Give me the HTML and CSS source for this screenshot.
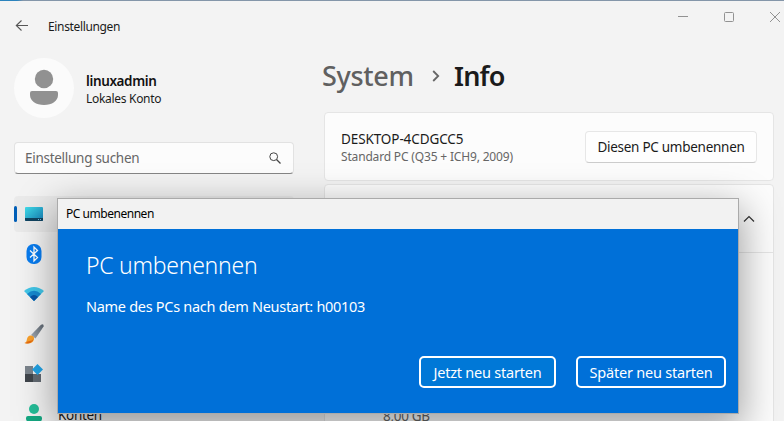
FILE: index.html
```html
<!DOCTYPE html>
<html lang="de">
<head>
<meta charset="utf-8">
<title>Einstellungen</title>
<link rel="stylesheet" href="styles.css">
</head>
<body>
<div class="window">
  <header class="titlebar">
    <svg class="back" width="14" height="12" viewBox="0 0 14 12"><path d="M13 5.500H1.500M6.500 .5L1.300 5.500l5.200 5" fill="none" stroke="#555" stroke-width="1.100"/></svg>
    <span class="app-title">Einstellungen</span>
    <div class="controls">
      <svg width="12" height="12" viewBox="0 0 12 12"><path d="M1 5.500h10" /></svg>
      <svg width="12" height="12" viewBox="0 0 12 12"><rect x="1.500" y="1.500" width="9" height="9" rx="1"/></svg>
      <svg width="12" height="12" viewBox="0 0 12 12"><path d="M1 1l10 10M11 1L1 11"/></svg>
    </div>
  </header>
  <div class="columns">
    <aside class="sidebar">
      <div class="account">
        <svg class="avatar" width="60" height="60" viewBox="0 0 60 60"><circle cx="30" cy="30" r="30" fill="#fbfbfb"/><circle cx="30" cy="21" r="9.200" fill="#919191"/><path d="M18 33h24q2 0 2 2v2c0 6-6 10-14 10s-14-4-14-10v-2q0-2 2-2z" fill="#919191"/></svg>
        <div class="account-text">
          <div class="user">linuxadmin</div>
          <div class="kind">Lokales Konto</div>
        </div>
      </div>
      <div class="search">
        <span class="placeholder">Einstellung suchen</span>
        <svg width="12" height="12" viewBox="0 0 12 12" fill="none" stroke="#444"><circle cx="4.700" cy="4.700" r="3.900"/><path d="M7.500 7.500l4 4" stroke-width="1.200"/></svg>
      </div>
      <nav class="nav">
        <div class="item selected">
          <svg width="20" height="20" viewBox="0 0 20 20"><defs><linearGradient id="scr" x2="1" y2="1"><stop stop-color="#40dbe8"/><stop offset="1" stop-color="#157fb7"/></linearGradient></defs><rect x="1" y="3" width="18" height="14" rx="1" fill="url(#scr)"/><path d="M1 14h18v2q0 1-1 1H2q-1 0-1-1z" fill="#104360"/><path d="M14 15.500h1m1 0h1" stroke="#70bcdd"/></svg>
        </div>
        <div class="item">
          <svg width="20" height="20" viewBox="0 0 20 20"><rect x="2.500" width="15" height="20" rx="7" fill="#087cf0"/><path d="M6 6.500l7.500 7L10 17V3l3.500 3.500L6 13.500" fill="none" stroke="#fff" stroke-width="1.300"/></svg>
        </div>
        <div class="item">
          <svg width="20" height="20" viewBox="0 0 20 20"><path d="M0 7Q10-1 20 7L10 17z" fill="#41c6e8"/><path d="M3 10q7-6.500 14 0l-7 7z" fill="#168ad0"/><path d="M6 13q4-4 8 0l-4 4z" fill="#0754a6"/></svg>
        </div>
        <div class="item">
          <svg width="20" height="20" viewBox="0 0 20 20"><defs><linearGradient id="handle" x1="1" x2="0" y2="1"><stop stop-color="#5e6771"/><stop offset="1" stop-color="#a5afba"/></linearGradient></defs><path d="M17 .8Q20-.8 19.600 2.500L11.500 14.500 7 11z" fill="url(#handle)"/><path d="M6.500 11.500q4 0 3.500 3.500c-1 5-6 5-9.500 4 2-.5 2-2 2.500-4q.8-3.500 3.500-3.500z" fill="#f9a02c"/><path d="M.5 19q3 1 6-.3 2.500-1 3-3.700-1.500 2-4 2t-3 1.500z" fill="#e66c12"/></svg>
        </div>
        <div class="item">
          <svg width="20" height="20" viewBox="0 0 20 20"><path d="M1 2h8v8H1z" fill="#7b848c"/><path d="M1 10h8v8H1z" fill="#3f454b"/><path d="M9 10h8v8H9z" fill="#626a72"/><path d="M13.500 0l5.500 5.500-5.500 5.500L8 5.500z" fill="#22a3e5"/></svg>
        </div>
        <div class="item">
          <svg width="20" height="20" viewBox="0 0 20 20"><circle cx="10" cy="5" r="5" fill="#25bd98"/><path d="M4 12h12q2 0 2 2v1q-1 5-8 5t-8-5v-1q0-2 2-2z" fill="#15a882"/></svg>
          <span class="nav-label">Konten</span>
        </div>
      </nav>
    </aside>
    <main class="content">
      <h1 class="crumbs"><span class="parent">System</span><svg width="8" height="12" viewBox="0 0 8 12"><path d="M1.200 1l5 5-5 5" fill="none" stroke="#666" stroke-width="1.800"/></svg><span class="current">Info</span></h1>
      <section class="card device">
        <div class="device-text">
          <div class="device-name">DESKTOP-4CDGCC5</div>
          <div class="device-model">Standard PC (Q35 + ICH9, 2009)</div>
        </div>
        <button class="rename"><span>Diesen PC umbenennen</span></button>
      </section>
      <section class="card specs">
        <div class="specs-head"><svg width="12" height="8" viewBox="0 0 12 8"><path d="M1 6.500l5-5 5 5" fill="none" stroke="#333" stroke-width="1.200"/></svg></div>
        <div class="specs-body"><span class="memory">8,00 GB</span></div>
      </section>
    </main>
  </div>
</div>
<div class="dialog">
  <div class="dialog-title"><span>PC umbenennen</span></div>
  <div class="dialog-body">
    <h2><span>PC umbenennen</span></h2>
    <p><span>Name des PCs nach dem Neustart: h00103</span></p>
    <div class="actions">
      <button class="now"><span>Jetzt neu starten</span></button>
      <button class="later"><span>Später neu starten</span></button>
    </div>
  </div>
</div>
</body>
</html>
```
FILE: styles.css
```css
* { box-sizing: border-box; }
body { margin: 0; height: 421px; overflow: hidden; background: #f3f3f3; font-family: "Noto Sans", "Open Sans", sans-serif; color: #1b1b1b; white-space: nowrap; }
svg { display: block; flex: none; }
button { font: inherit; color: inherit; padding: 0; display: flex; align-items: center; justify-content: center; white-space: nowrap; }
.window { height: 421px; overflow: hidden; border-top: 1px solid #8496a9; border-image: linear-gradient(90deg, #2b83bd 0, #2b83bd 18px, #8496a9 24px) 1; }
.titlebar { height: 49px; display: flex; align-items: center; padding-left: 15px; }
.app-title { margin-left: 19px; font-size: 12px; letter-spacing: -.35px; line-height: 18px; padding-top: 2px; }
.controls { margin: -17px 3px 0 auto; display: flex; gap: 34px; }
.controls svg { fill: none; stroke: #929292; }
.columns { display: flex; height: 371px; }
.sidebar { width: 324px; padding: 8px 30px 0 14px; }
.account { display: flex; height: 60px; gap: 12px; }
.account-text { padding-top: 14px; }
.user { font-size: 13.500px; font-weight: 600; line-height: 19px; letter-spacing: -.37px; color: #111; }
.kind { font-size: 12px; line-height: 16px; letter-spacing: -.3px; }
.search { width: 280px; height: 32px; margin-top: 24px; padding: 0 12px 0 10px; display: flex; align-items: center; justify-content: space-between; background: #fcfcfc; border: 1px solid #e2e2e2; border-bottom-color: #858585; border-radius: 4px; }
.placeholder { color: #666; font-size: 13.500px; letter-spacing: -.28px; }
.nav { margin-top: 22px; display: grid; gap: 4px; width: 280px; }
.item { height: 36px; padding-left: 10px; display: flex; align-items: center; gap: 14px; border-radius: 4px; }
.selected { background: #eaeaea; padding-left: 0; gap: 7px; }
.selected::before { content: ""; width: 3px; height: 16px; border-radius: 2px; background: #005fb8; }
.nav-label { font-size: 13.500px; letter-spacing: -.3px; line-height: 19px; padding-top: 3px; }
.content { width: 450px; }
.crumbs { margin: 5px 0 0; padding-bottom: 2px; height: 57px; line-height: 42px; display: flex; font-size: 27px; font-weight: 600; }
.parent { color: #606060; margin-left: -2px; width: 110px; letter-spacing: -.3px; font-weight: 500; }
.crumbs svg { margin-top: 15px; }
.current { margin-left: 14px; letter-spacing: -.8px; }
.card { background: #fcfcfc; border: 1px solid #e5e5e5; border-radius: 4px; }
.device { height: 69px; padding: 0 16px; display: flex; align-items: center; justify-content: space-between; }
.device-text { padding-top: 2px; }
.device-name { font-size: 13.500px; line-height: 19px; letter-spacing: -.1px; }
.device-model { font-size: 12px; line-height: 16px; color: #666; letter-spacing: -.17px; }
.rename { width: 172px; height: 32px; font-size: 13.500px; letter-spacing: -.27px; background: #fefefe; border: 1px solid #e7e7e7; border-bottom-color: #ccc; border-radius: 4px; }
.specs { margin-top: 3px; height: 300px; }
.specs-head { height: 68px; display: flex; align-items: center; justify-content: flex-end; padding-right: 18px; border-bottom: 1px solid #e5e5e5; }
.specs-body { padding: 153px 0 0 58px; line-height: 19px; }
.memory { color: #666; font-size: 13.500px; letter-spacing: -.3px; }
.dialog { position: absolute; left: 57px; top: 198px; width: 682px; height: 216px; border: 1px solid #aaa; box-shadow: 0 12px 36px 3px rgba(0,0,0,.36); }
.dialog-title { height: 30px; padding: 0 8px; line-height: 30px; font-size: 12px; letter-spacing: -.47px; color: #000; background: #f2f2f2; }
.dialog-body { height: 184px; padding: 19px 12px 25px 28px; display: flex; flex-direction: column; background: #0070d8; color: #fff; }
h2 { margin: 0; font-size: 23px; line-height: 34px; font-weight: 300; letter-spacing: -.27px; }
p { margin: 14px 0 0; font-size: 14.500px; line-height: 20px; letter-spacing: -.29px; }
.actions { display: flex; justify-content: flex-end; gap: 20px; margin-top: auto; }
.actions button { height: 32px; font-size: 14.500px; letter-spacing: -.22px; border: 2px solid #fff; border-radius: 5px; }
.now { width: 137px; background: #0078d7; }
.later { width: 150px; background: #0070d8; }
```
